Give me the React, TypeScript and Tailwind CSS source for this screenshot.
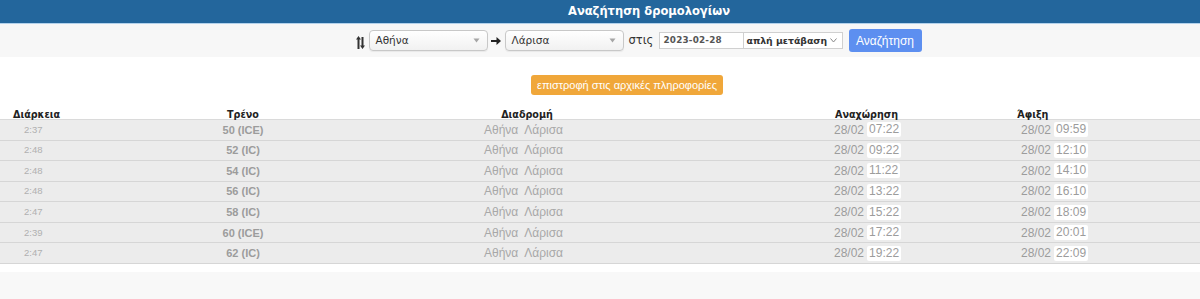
import React from "react";

const rows = [
  { d: "2:37", t: "50 (ICE)", dep: "07:22", arr: "09:59" },
  { d: "2:48", t: "52 (IC)", dep: "09:22", arr: "12:10" },
  { d: "2:48", t: "54 (IC)", dep: "11:22", arr: "14:10" },
  { d: "2:48", t: "56 (IC)", dep: "13:22", arr: "16:10" },
  { d: "2:47", t: "58 (IC)", dep: "15:22", arr: "18:09" },
  { d: "2:39", t: "60 (ICE)", dep: "17:22", arr: "20:01" },
  { d: "2:47", t: "62 (IC)", dep: "19:22", arr: "22:09" },
];

function Caret() {
  return (
    <svg width="7" height="5" viewBox="0 0 7 5" className="mr-[7px]">
      <path d="M0.5 0.5 L6.5 0.5 L3.5 4.5 Z" fill="#a5a5a5" />
    </svg>
  );
}

function CitySelect({ label }: { label: string }) {
  return (
    <div className="flex h-[21px] w-[119px] items-center justify-between rounded-[4px] border border-[#c8c8c8] bg-gradient-to-b from-white to-[#f1f1f1] pl-[6px] font-['DejaVu_Sans',sans-serif] text-[10.5px] text-[#333] shadow-[0_1px_1px_rgba(0,0,0,0.06)]">
      <span>{label}</span>
      <Caret />
    </div>
  );
}

export default function App() {
  return (
    <div className="h-[299px] w-[1200px] overflow-hidden bg-white font-['Liberation_Sans',sans-serif]">
      {/* title bar */}
      <div className="flex h-[23px] items-center justify-center bg-[#23669c] pl-[98px] font-['DejaVu_Sans',sans-serif] text-[11.5px] font-bold text-white">
        Αναζήτηση δρομολογίων
      </div>
      <div className="h-[1px] bg-[#b3d2ec]" />
      {/* toolbar */}
      <div className="flex h-[33px] items-center justify-center bg-[#f7f7f7] pl-[77px]">
        <svg width="9" height="13" viewBox="0 0 9 13" className="mr-[4px] mt-[3px]">
          <path d="M2.5 0 L5 3.5 L3.5 3.5 L3.5 13 L1.5 13 L1.5 3.5 L0 3.5 Z" fill="#333" />
          <path d="M6.5 13 L9 9.5 L7.5 9.5 L7.5 1 L5.5 1 L5.5 9.5 L4 9.5 Z" fill="#333" />
        </svg>
        <CitySelect label="Αθήνα" />
        <div className="flex w-[17px] justify-center">
          <svg width="10" height="10" viewBox="0 0 10 10">
            <path d="M0 4 L5.5 4 L5.5 1 L10 5 L5.5 9 L5.5 6 L0 6 Z" fill="#222" />
          </svg>
        </div>
        <CitySelect label="Λάρισα" />
        <span className="w-[35px] whitespace-nowrap pl-[5px] font-['DejaVu_Sans',sans-serif] text-[11.5px] text-[#333]">στις</span>
        <div className="flex h-[17px] w-[85px] items-center border border-[#d0d0d0] bg-white pl-[4px] font-['DejaVu_Sans',sans-serif] text-[8.8px] font-bold tracking-[0.2px] text-[#555]">
          2023-02-28
        </div>
        <div className="flex h-[17px] w-[99px] items-center justify-between whitespace-nowrap border border-l-0 border-[#d0d0d0] bg-white pl-[3px] font-['DejaVu_Sans',sans-serif] text-[9.3px] font-bold text-[#333]">
          <span>απλή μετάβαση</span>
          <svg width="7" height="5" viewBox="0 0 7 5" className="mr-[5px]">
            <path d="M0.5 0.5 L3.5 4 L6.5 0.5" stroke="#888" fill="none" strokeWidth="1" />
          </svg>
        </div>
        <button className="ml-[6px] flex h-[23px] w-[73px] items-center justify-center rounded-[3px] bg-[#5d8ff0] text-[12px] text-white">
          Αναζήτηση
        </button>
      </div>
      {/* back button */}
      <div className="flex justify-center pt-[18px] pl-[54px]">
        <div className="flex h-[20px] w-[192px] items-center justify-center rounded-[3px] bg-[#f0a73a] text-[11px] text-white">
          επιστροφή στις αρχικές πληροφορίες
        </div>
      </div>
      {/* table header */}
      <div className="mt-[11px] flex h-[13px] items-end font-['DejaVu_Sans',sans-serif] text-[9.6px] font-bold leading-[8px] text-[#222]">
        <div className="w-[120px] pl-[13px]">Διάρκεια</div>
        <div className="w-[246px] text-center">Τρένο</div>
        <div className="w-[318px] pl-[4px] text-center">Διαδρομή</div>
        <div className="w-[150px]" />
        <div className="w-[183px] pl-[1px]">Αναχώρηση</div>
        <div className="flex-1">Άφιξη</div>
      </div>
      {/* rows */}
      <div className="border-t border-[#dadada]">
        {rows.map((r, i) => (
          <div
            key={i}
            className="flex h-[20.57px] items-center border-b border-[#d6d6d6] bg-[#ececec] text-[12px] leading-[14px] text-[#9c9c9c]"
          >
            <div className="w-[120px] pl-[24px] text-[9.5px] text-[#b0b0b0]">{r.d}</div>
            <div className="w-[246px] text-center text-[11px] font-bold">{r.t}</div>
            <div className="flex w-[318px] justify-center gap-[6px] pr-[3px] text-[#a8a8a8]">
              <span>Αθήνα</span>
              <span>Λάρισα</span>
            </div>
            <div className="w-[150px]" />
            <div className="flex w-[187px] items-center">
              <span>28/02</span>
              <span className="ml-[3px] rounded-[2px] bg-white px-[2px] py-[1px] leading-[13px]">{r.dep}</span>
            </div>
            <div className="flex flex-1 items-center">
              <span>28/02</span>
              <span className="ml-[3px] rounded-[2px] bg-white px-[2px] py-[1px] leading-[13px]">{r.arr}</span>
            </div>
          </div>
        ))}
      </div>
      <div className="mt-[8px] h-[40px] bg-[#f8f8f8]" />
    </div>
  );
}
